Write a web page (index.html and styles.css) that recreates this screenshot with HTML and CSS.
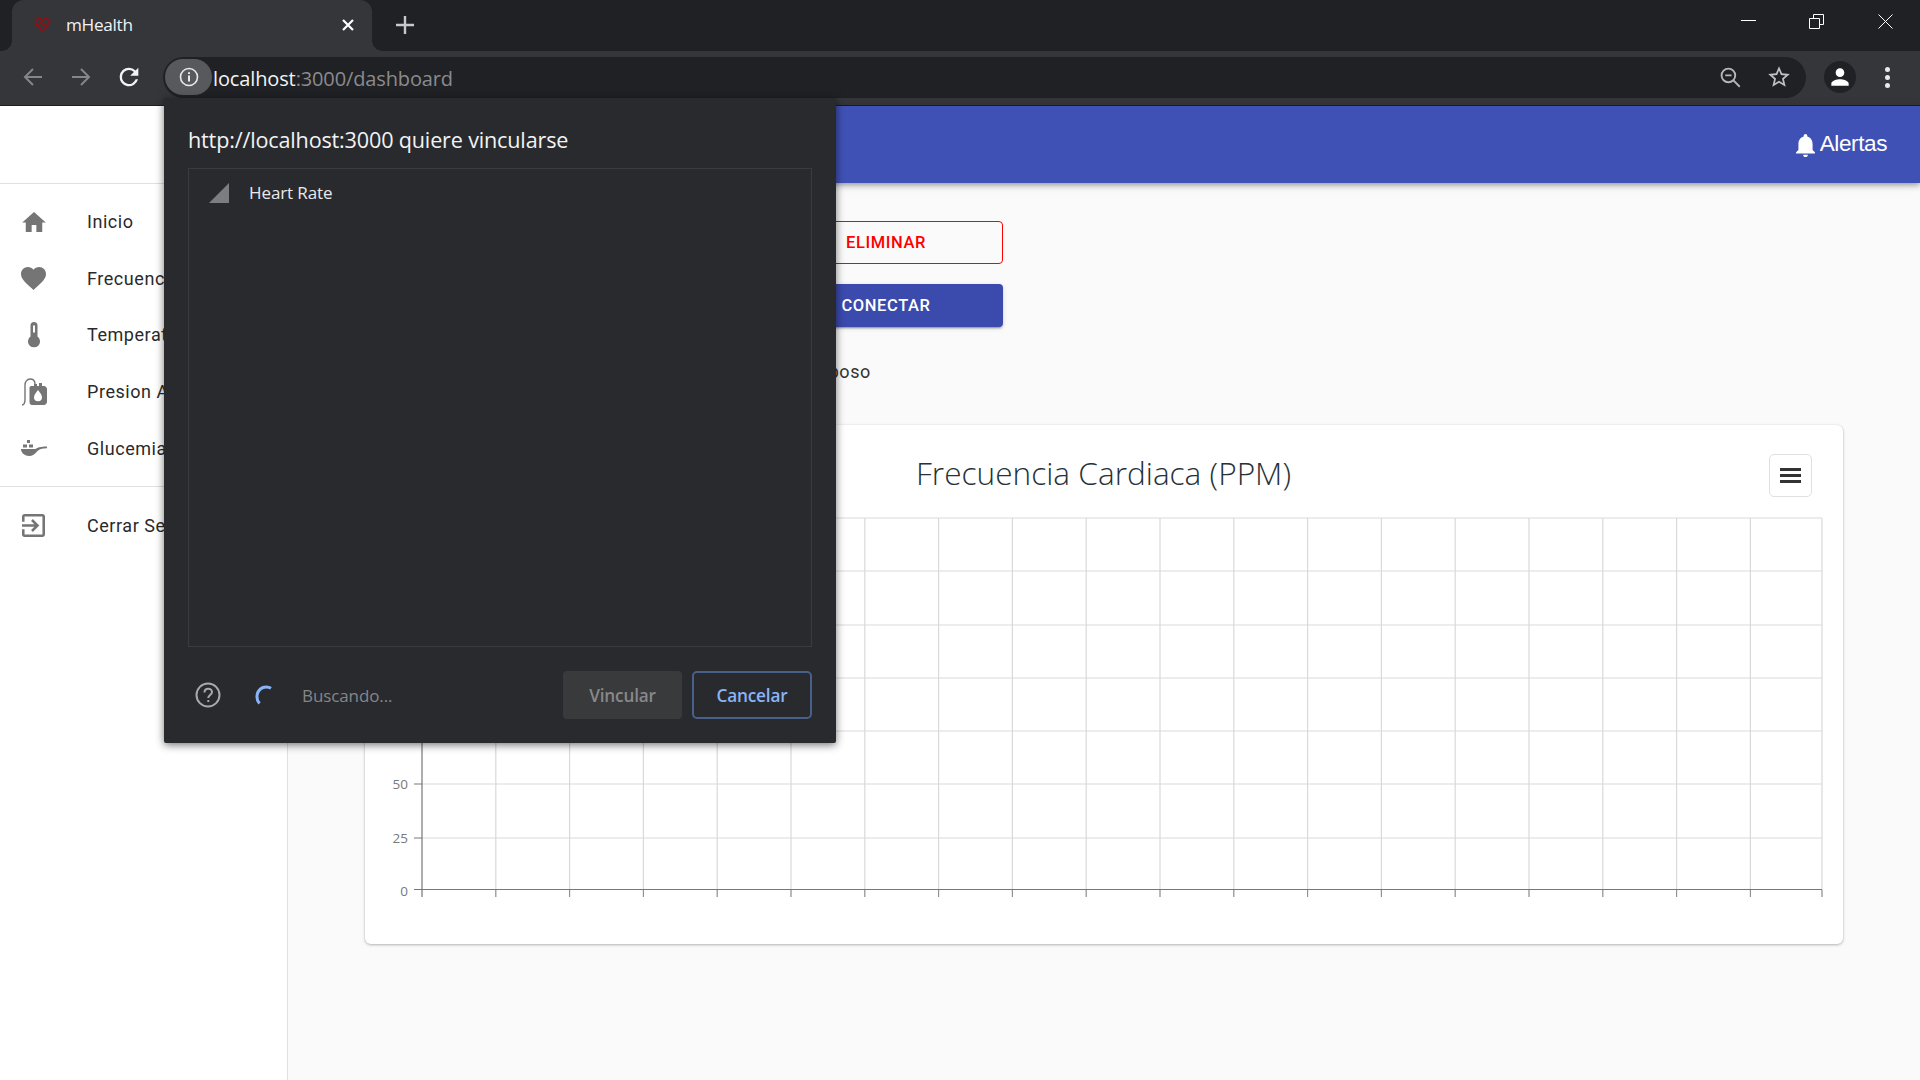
FILE: index.html
```html
<!DOCTYPE html>
<html lang="es">
<head>
<meta charset="utf-8">
<title>mHealth</title>
<link rel="stylesheet" href="styles.css">
</head>
<body>
<div class="browser">
  <div class="tabstrip">
    <div class="tab">
      <svg class="favicon" viewBox="0 0 24 24"><path d="M12 21.5 3.6 12.6C.6 9.4 2.4 3.5 7 3.5c2.2 0 3.8 1 5 2.8 1.2-1.8 2.8-2.8 5-2.8 4.6 0 6.4 5.900 3.400 9.100z" fill="none" stroke="#8f1116" stroke-width="2.4"/><path d="M3 11h5l2-3 3.500 6 2-3h5.500" fill="none" stroke="#8f1116" stroke-width="2"/></svg>
      <span class="tab-title">mHealth</span>
      <svg class="tab-close" viewBox="0 0 12 12"><path d="M1 1l10 10M11 1 1 11" stroke="#fff" stroke-width="2.200"/></svg>
    </div>
    <svg class="new-tab" viewBox="0 0 18 18"><path d="M9 0v18M0 9h18" stroke="#c8c9cb" stroke-width="2.400"/></svg>
    <div class="win-controls">
      <svg class="win-icon" viewBox="0 0 15 15"><path d="M0 6.500h15" stroke="#fff" stroke-width="1"/></svg>
      <svg class="win-icon" viewBox="0 0 15 15"><path d="M.5 4.500h10v10H.5zM4.500 4.500V.5h10v10h-4" fill="none" stroke="#fff" stroke-width="1"/></svg>
      <svg class="win-icon" viewBox="0 0 15 15"><path d="M.5.5l14 14M14.500.5l-14 14" stroke="#fff" stroke-width="1"/></svg>
    </div>
  </div>

  <div class="toolbar">
    <div class="nav-btn"><svg class="nav-icon" viewBox="0 0 20 20"><path d="M19 10H2M10 2l-8 8 8 8" fill="none" stroke="#85868a" stroke-width="2"/></svg></div>
    <div class="nav-btn"><svg class="nav-icon" viewBox="0 0 20 20"><path d="M1 10h17M10 2l8 8-8 8" fill="none" stroke="#85868a" stroke-width="2"/></svg></div>
    <div class="nav-btn"><svg class="reload-icon" viewBox="0 0 24 24"><path d="M17.650 6.350A7.960 7.960 0 0 0 12 4a8 8 0 1 0 7.730 10h-2.080A6 6 0 1 1 12 6c1.660 0 3.140.69 4.220 1.780L13 11h7V4z" fill="#f1f3f4"/></svg></div>
    <div class="address">
      <div class="info-pill"><svg class="info-icon" viewBox="0 0 20 20"><circle cx="10" cy="10" r="8.500" fill="none" stroke="#e8e9ea" stroke-width="1.600"/><path d="M10 8.500v6M10 5.200v1.800" stroke="#e8e9ea" stroke-width="2"/></svg></div>
      <span class="url"><span class="url-host">localhost</span>:3000/dashboard</span>
      <svg class="zoom-icon" viewBox="0 0 20 20"><circle cx="8" cy="8" r="6.500" fill="none" stroke="#b4b5b7" stroke-width="1.800"/><path d="M5 8h6M12.800 12.800l6 6" stroke="#b4b5b7" stroke-width="1.800"/></svg>
      <svg class="star-icon" viewBox="0 0 24 24"><path d="M22 9.240l-7.190-.62L12 2 9.190 8.630 2 9.240l5.460 4.730L5.820 21 12 17.270 18.180 21l-1.630-7.030L22 9.240zM12 15.400l-3.760 2.270 1-4.280-3.320-2.880 4.380-.38L12 6.100l1.710 4.040 4.380.38-3.320 2.880 1 4.280L12 15.400z" fill="#c0c1c3"/></svg>
    </div>
    <div class="profile"><svg class="person-icon" viewBox="0 0 24 24"><path d="M12 12c2.210 0 4-1.790 4-4s-1.790-4-4-4-4 1.790-4 4 1.790 4 4 4zm0 2c-2.670 0-8 1.340-8 4v2h16v-2c0-2.660-5.330-4-8-4z" fill="#fff"/></svg></div>
    <div class="dots"><i></i><i></i><i></i></div>
  </div>

  <div class="page">
    <aside class="sidebar">
      <div class="side-top"></div>
      <ul class="side-list">
        <li class="side-item"><span class="side-ico"><svg class="ico-home" viewBox="2 3 20 17"><path d="M10 20v-6h4v6h5v-8h3L12 3 2 12h3v8z"/></svg></span>Inicio</li>
        <li class="side-item"><span class="side-ico"><svg class="ico-heart" viewBox="2 3 20 18.350"><path d="M12 21.350l-1.450-1.320C5.400 15.360 2 12.280 2 8.500 2 5.420 4.420 3 7.500 3c1.740 0 3.410.81 4.500 2.090C13.090 3.810 14.760 3 16.500 3 19.580 3 22 5.420 22 8.500c0 3.780-3.400 6.860-8.550 11.540L12 21.350z"/></svg></span>Frecuencia Cardiaca</li>
        <li class="side-item"><span class="side-ico"><svg class="ico-therm" viewBox="0 0 12 26"><path d="M2.500 14.500V3.500a3.500 3.500 0 0 1 7 0v11a6 6 0 1 1-7 0z"/><path d="M5 3.500h2v7H5z" fill="#fff"/></svg></span>Temperatura</li>
        <li class="side-item"><span class="side-ico"><svg class="ico-bag" viewBox="0 0 26 28"><path d="M1 27c3 0 3-3 3-6V7c0-3 2-6 5-6s5 2 5 5" fill="none" stroke="#757575" stroke-width="1.400"/><path d="M10 8h3V6h3v2h2V5h3v3h2c1.500 0 3 1.500 3 3v13c0 1.500-1.500 3-3 3H11c-1.500 0-2.500-1-2.500-3V10c0-1 .5-2 1.500-2z"/><path d="M17 12c2.500 3.500 4 5 4 7.200a4 4 0 0 1-8 0c0-2.200 1.500-3.700 4-7.200z" fill="#fff"/></svg></span>Presion Arterial</li>
        <li class="side-item"><span class="side-ico"><svg class="ico-spoon" viewBox="0 0 26 17"><path d="M6 0h3v3H6zM2 4.500h4v3H2zM8 4.500h4v3H8zM0 9h14.500c2-1.500 5-2.500 11.500-2.500v1.800c-5 0-8 1-10 3.200-2 2.500-4.500 4.500-8 4.500-4 0-8-3-8-7z"/></svg></span>Glucemia</li>
      </ul>
      <ul class="side-list side-list-last">
        <li class="side-item"><span class="side-ico"><svg class="ico-exit" viewBox="3 3 18 18"><path d="M10.090 15.590L11.500 17l5-5-5-5-1.410 1.410L12.670 11H3v2h9.670l-2.580 2.590zM19 3H5c-1.110 0-2 .9-2 2v4h2V5h14v14H5v-4H3v4c0 1.100.89 2 2 2h14c1.100 0 2-.9 2-2V5c0-1.100-.9-2-2-2z"/></svg></span>Cerrar Sesion</li>
      </ul>
    </aside>

    <main class="main">
      <header class="appbar">
        <svg class="bell" viewBox="4 2.500 16 19.500"><path d="M12 22c1.100 0 2-.9 2-2h-4c0 1.100.89 2 2 2zm6-6v-5c0-3.070-1.640-5.640-4.500-6.320V4c0-.83-.67-1.500-1.500-1.500s-1.500.67-1.500 1.500v.68C7.630 5.360 6 7.920 6 11v5l-2 2v1h16v-1l-2-2z" fill="#fff"/></svg>
        <span class="alert-text">Alertas</span>
      </header>
      <div class="content">
        <button class="btn btn-outline">ELIMINAR</button>
        <button class="btn btn-solid">CONECTAR</button>
        <p class="status">En reposo</p>
        <section class="card">
          <div class="card-head">
            <h2 class="card-title">Frecuencia Cardiaca (PPM)</h2>
            <div class="menu-btn"><span></span><span></span><span></span></div>
          </div>
          <svg class="chart" viewBox="365 517 1478 427">
            <g class="grid">
              <path d="M414 518H1822M414 571H1822M414 625H1822M414 678H1822M414 731H1822M414 784H1822M414 838H1822"/>
              <path d="M495.800 518V897M569.600 518V897M643.400 518V897M717.200 518V897M791 518V897M864.800 518V897M938.600 518V897M1012.400 518V897M1086.200 518V897M1160 518V897M1233.800 518V897M1307.600 518V897M1381.400 518V897M1455.200 518V897M1529 518V897M1602.800 518V897M1676.600 518V897M1750.400 518V897M1822 518V897"/>
            </g>
            <g class="ticks">
              <path d="M414 784H422M414 838H422M495.800 890V897M569.600 890V897M643.400 890V897M717.200 890V897M791 890V897M864.800 890V897M938.600 890V897M1012.400 890V897M1086.200 890V897M1160 890V897M1233.800 890V897M1307.600 890V897M1381.400 890V897M1455.200 890V897M1529 890V897M1602.800 890V897M1676.600 890V897M1750.400 890V897M1822 890V897"/>
            </g>
            <path class="axis" d="M422 517V897M414 889.500H1822"/>
            <text class="tick-label" x="408" y="789">50</text>
            <text class="tick-label" x="408" y="843">25</text>
            <text class="tick-label" x="408" y="896">0</text>
          </svg>
        </section>
      </div>
    </main>
  </div>

  <div class="chooser">
    <div class="chooser-title">http://localhost:3000 quiere vincularse</div>
    <div class="device-list">
      <div class="device">
        <svg class="signal" viewBox="0 0 20 20"><path d="M0 20 20 0v20z" fill="#7c7d7f"/></svg>
        <span>Heart Rate</span>
      </div>
    </div>
    <div class="chooser-foot">
      <svg class="help" viewBox="0 0 26 26"><circle cx="13" cy="13" r="11.500" fill="none" stroke="#a8a9ab" stroke-width="2"/><path d="M9.500 10.500c0-5 7.500-5 7.500-.5 0 3-3.500 3-3.800 6" fill="none" stroke="#a8a9ab" stroke-width="2"/><path d="M12.300 18h2v2h-2z" fill="#a8a9ab"/></svg>
      <svg class="spinner" viewBox="0 0 20 20"><path d="M4.500 18.500C.5 14 1 5.500 8 2.500c3-1 5.500-.8 8 .8" fill="none" stroke="#8ab4f8" stroke-width="3"/></svg>
      <span class="searching">Buscando...</span>
      <div class="cbtn cbtn-off">Vincular</div>
      <div class="cbtn cbtn-cancel">Cancelar</div>
    </div>
  </div>
</div>
</body>
</html>
```

FILE: styles.css
```css
* { box-sizing: border-box; }
html, body { margin: 0; height: 100%; overflow: hidden; }
body { font-family: Roboto, sans-serif; background: #fafafa; }

.browser { position: relative; width: 1920px; height: 1080px; display: flex; flex-direction: column; }

/* tab strip */
.tabstrip { height: 51px; background: #202124; display: flex; align-items: flex-end; padding-left: 12px; flex: none; }
.tab { position: relative; width: 360px; height: 51px; background: #35363a; border-radius: 12px 12px 0 0; display: flex; align-items: center; padding: 0 18px 2px 22px; color: #e8eaed; }
.tab::before, .tab::after { content: ""; position: absolute; bottom: 0; width: 10px; height: 10px; }
.tab::before { left: -10px; background: radial-gradient(circle at 0 0, transparent 9.500px, #35363a 10px); }
.tab::after { right: -10px; background: radial-gradient(circle at 100% 0, transparent 9.500px, #35363a 10px); }
.favicon { width: 17px; height: 17px; flex: none; }
.tab-title { margin-left: 15px; font: 17.200px "Open Sans", sans-serif; letter-spacing: -.3px; color: #f1f3f4; }
.tab-close { width: 12px; height: 12px; margin-left: auto; }
.new-tab { width: 18px; height: 18px; margin: 0 0 17px 24px; flex: none; }
.win-controls { margin-left: auto; align-self: flex-start; display: flex; padding: 14px 27px 0 0; gap: 54px; }
.win-icon { width: 15px; height: 15px; display: block; }
.win-icon:first-child { margin-right: -1px; }

/* toolbar */
.toolbar { height: 55px; background: #35363a; border-bottom: 1px solid #1d1e20; padding: 0 0 2px 9px; display: flex; align-items: center; flex: none; }
.nav-btn { width: 48px; display: flex; justify-content: center; flex: none; }
.nav-icon { width: 20px; height: 20px; }
.reload-icon { width: 28px; height: 28px; }
.address { width: 1643px; height: 41px; margin-left: 10px; border-radius: 21px; background: #202124; display: flex; align-items: center; padding-left: 2px; flex: none; }
.info-pill { width: 47px; height: 36px; border-radius: 18px; background: #58595c; display: flex; align-items: center; justify-content: center; flex: none; }
.info-icon { width: 20px; height: 20px; }
.url { margin: 2px 0 0 1px; font: 20px "Open Sans", sans-serif; letter-spacing: -.13px; color: #8a8b8e; }
.url-host { color: #f1f3f4; }
.zoom-icon { width: 21px; height: 21px; margin-left: auto; }
.star-icon { width: 26px; height: 26px; margin: 0 14px 0 25px; }
.profile { width: 32px; height: 32px; border-radius: 50%; background: #202124; margin-left: 18px; display: flex; align-items: center; justify-content: center; flex: none; }
.person-icon { width: 26px; height: 26px; }
.dots { margin-left: 29px; display: flex; flex-direction: column; gap: 3px; }
.dots i { display: block; width: 5px; height: 5px; border-radius: 50%; background: #e8eaed; }

/* page */
.page { flex: 1; display: flex; min-height: 0; }
.sidebar { width: 288px; background: #fff; border-right: 1px solid #e0e0e0; flex: none; }
.side-top { height: 78px; border-bottom: 1px solid #e0e0e0; }
.side-list { list-style: none; margin: 0; padding: 9.500px 0 10px; border-bottom: 1px solid #e0e0e0; }
.side-list-last { border-bottom: 0; }
.side-item { height: 56.600px; display: flex; align-items: center; font-size: 18px; letter-spacing: .55px; color: #2a2a2a; white-space: nowrap; }
.side-ico { width: 87px; padding-right: 20px; display: flex; justify-content: center; flex: none; }
.side-ico svg { fill: #757575; display: block; }
.ico-home { width: 24px; height: 20px; }
.ico-heart { width: 25px; height: 23px; }
.ico-therm { width: 12px; height: 26px; }
.ico-bag { width: 26px; height: 28px; }
.ico-spoon { width: 26px; height: 17px; }
.ico-exit { width: 23px; height: 23px; }

.main { flex: 1; min-width: 0; }
.appbar { height: 77px; background: #3f51b5; display: flex; align-items: center; justify-content: flex-end; padding-right: 33px; box-shadow: 0 2px 4px -1px rgba(0,0,0,.2), 0 4px 5px rgba(0,0,0,.14), 0 1px 10px rgba(0,0,0,.12); position: relative; }
.bell { width: 19px; height: 23px; margin: 2px 5px 0 0; }
.alert-text { font: 22.500px "Liberation Sans", sans-serif; letter-spacing: -.4px; color: #fff; margin-top: -2px; }

.content { display: flex; flex-direction: column; align-items: flex-start; padding-top: 38px; }
.btn { width: 234px; height: 43px; margin-left: 481px; border-radius: 4px; font: 500 16.500px Roboto, sans-serif; letter-spacing: .6px; display: block; padding: 0; }
.btn-outline { background: transparent; border: 1px solid #f00; color: #f00; }
.btn-solid { margin-top: 20px; background: #3b4aad; border: 0; color: #fff; box-shadow: 0 3px 1px -2px rgba(0,0,0,.2), 0 2px 2px rgba(0,0,0,.14), 0 1px 5px rgba(0,0,0,.12); }
.status { width: 583px; height: 21px; margin: 34px 0 0; text-align: right; font-size: 18px; line-height: 21px; letter-spacing: .6px; color: #333; }
.card { width: 1478px; height: 519px; margin: 43px 0 0 77px; background: #fff; border-radius: 6px; box-shadow: 0 1px 3px rgba(0,0,0,.28), 0 0 2px rgba(0,0,0,.06); }
.card-head { height: 92px; display: flex; align-items: center; padding: 2px 31px 0 551px; }
.card-title { margin: 0; font: 300 31.600px "Open Sans", sans-serif; color: #263238; white-space: nowrap; }
.menu-btn { width: 43px; height: 43px; margin-left: auto; margin-top: 6px; border: 1px solid #e0e0e0; border-radius: 5px; display: flex; flex-direction: column; justify-content: center; align-items: center; gap: 3px; }
.menu-btn span { width: 21px; height: 3px; background: #333; }
.chart { display: block; width: 1478px; height: 427px; }
.grid path { fill: none; stroke: #d9d9d9; stroke-width: 1.200; }
.ticks path { fill: none; stroke: #8a8a8a; stroke-width: 1; }
.axis { fill: none; stroke: #777; stroke-width: 1.200; }
.tick-label { font: 13.500px "Open Sans", sans-serif; fill: #77797c; text-anchor: end; }

/* bluetooth chooser popup */
.chooser { position: absolute; left: 164px; top: 98px; width: 672px; height: 645px; background: #292a2d; box-shadow: 0 2px 8px rgba(0,0,0,.55); color: #e8eaed; display: flex; flex-direction: column; padding: 0 24px; border-radius: 0 0 2px 2px; }
.chooser-title { height: 70px; padding-top: 27px; font: 21.600px "Open Sans", sans-serif; letter-spacing: -.17px; color: #f1f3f4; }
.device-list { height: 479px; border: 1px solid #3a3b3e; }
.device { display: flex; align-items: center; height: 47px; padding-left: 20px; font: 17px "Open Sans", sans-serif; letter-spacing: -.1px; color: #e8eaed; }
.signal { width: 20px; height: 20px; margin: 0 20px 0 0; flex: none; }
.chooser-foot { height: 96px; display: flex; align-items: center; }
.help { width: 26px; height: 26px; margin-left: 7px; flex: none; }
.spinner { width: 20px; height: 20px; margin-left: 34px; flex: none; }
.searching { margin-left: 27px; font: 17px "Open Sans", sans-serif; letter-spacing: -.1px; color: #85868a; }
.cbtn { width: 119px; height: 48px; border-radius: 4px; display: flex; align-items: center; justify-content: center; font: 600 17.200px "Open Sans", sans-serif; letter-spacing: -.2px; }
.cbtn-off { margin-left: auto; background: #393a3c; color: #87888b; }
.cbtn-cancel { width: 120px; margin-left: 10px; border: 2px solid #47618a; border-radius: 5px; color: #8ab4f8; }
```
